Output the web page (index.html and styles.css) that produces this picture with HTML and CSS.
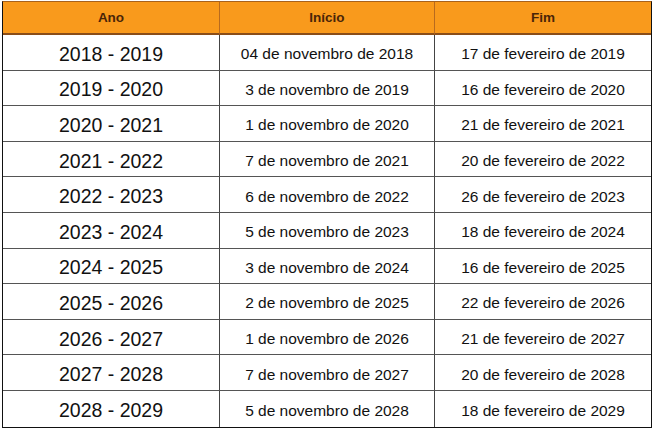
FILE: index.html
```html
<!DOCTYPE html>
<html lang="pt">
<head>
<meta charset="utf-8">
<title>Calendário</title>
<link rel="stylesheet" href="styles.css">
</head>
<body>
<div class="tbl">
  <div class="hd">Ano</div><div class="hd">Início</div><div class="hd last">Fim</div>
  <div class="c yr">2018 - 2019</div><div class="c">04 de novembro de 2018</div><div class="c last">17 de fevereiro de 2019</div>
  <div class="c yr">2019 - 2020</div><div class="c">3 de novembro de 2019</div><div class="c last">16 de fevereiro de 2020</div>
  <div class="c yr">2020 - 2021</div><div class="c">1 de novembro de 2020</div><div class="c last">21 de fevereiro de 2021</div>
  <div class="c yr">2021 - 2022</div><div class="c">7 de novembro de 2021</div><div class="c last">20 de fevereiro de 2022</div>
  <div class="c yr">2022 - 2023</div><div class="c">6 de novembro de 2022</div><div class="c last">26 de fevereiro de 2023</div>
  <div class="c yr">2023 - 2024</div><div class="c">5 de novembro de 2023</div><div class="c last">18 de fevereiro de 2024</div>
  <div class="c yr">2024 - 2025</div><div class="c">3 de novembro de 2024</div><div class="c last">16 de fevereiro de 2025</div>
  <div class="c yr">2025 - 2026</div><div class="c">2 de novembro de 2025</div><div class="c last">22 de fevereiro de 2026</div>
  <div class="c yr">2026 - 2027</div><div class="c">1 de novembro de 2026</div><div class="c last">21 de fevereiro de 2027</div>
  <div class="c yr">2027 - 2028</div><div class="c">7 de novembro de 2027</div><div class="c last">20 de fevereiro de 2028</div>
  <div class="c yr bot">2028 - 2029</div><div class="c bot">5 de novembro de 2028</div><div class="c last bot">18 de fevereiro de 2029</div>
</div>
</body>
</html>
```
FILE: styles.css
```css
html, body {
  margin: 0;
  padding: 0;
  background: #ffffff;
}
body {
  padding: 1px 3px 0 2px;
  font-family: "Liberation Sans", Arial, sans-serif;
}
.tbl {
  display: grid;
  grid-template-columns: 217px 215px 216px;
  grid-template-rows: 33px repeat(11, 35.6px);
  border: 1px solid #111;
  border-top: 1px solid #a8621c;
  width: 648px;
}
.hd {
  background: #f99a1c;
  color: #4a2508;
  font-weight: bold;
  font-size: 13.5px;
  display: flex;
  align-items: center;
  justify-content: center;
  border-right: 1px solid #b86a1e;
  border-bottom: 2px solid #8a4d18;
  padding-bottom: 1px;
  box-sizing: border-box;
}
.c {
  display: flex;
  align-items: center;
  justify-content: center;
  color: #111;
  font-size: 15.5px;
  border-right: 1.5px solid #444;
  border-bottom: 1.5px solid #555;
  box-sizing: border-box;
  padding-top: 4px;
}
.yr {
  font-size: 19.5px;
}
.last {
  border-right: none;
}
.bot {
  border-bottom: none;
}
```
